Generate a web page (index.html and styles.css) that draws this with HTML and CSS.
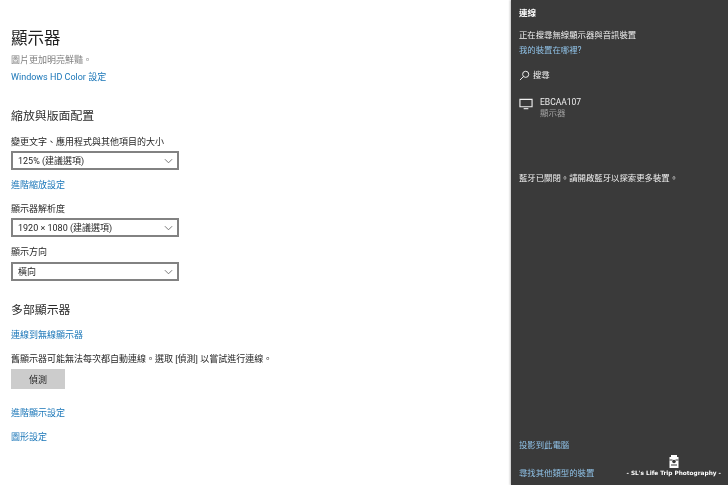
FILE: index.html
```html
<!DOCTYPE html>
<html lang="zh-Hant">
<head>
<meta charset="utf-8">
<title>顯示器</title>
<link rel="stylesheet" href="styles.css">
</head>
<body>
<div class="screen">
  <main class="settings">
    <h1 class="title">顯示器</h1>
    <p class="row hint">圖片更加明亮鮮豔。</p>
    <a class="row link l-hd">Windows HD Color 設定</a>
    <h2 class="heading h-scale">縮放與版面配置</h2>
    <p class="row label l-first">變更文字、應用程式與其他項目的大小</p>
    <div class="select s-scale"><span>125% (建議選項)</span><svg class="chev" viewBox="0 0 10 6"><path d="M1 1l4 4 4-4"/></svg></div>
    <a class="row link after-select">進階縮放設定</a>
    <p class="row label l-res">顯示器解析度</p>
    <div class="select s-res"><span>1920 × 1080 (建議選項)</span><svg class="chev" viewBox="0 0 10 6"><path d="M1 1l4 4 4-4"/></svg></div>
    <p class="row label l-orient">顯示方向</p>
    <div class="select s-orient"><span>橫向</span><svg class="chev" viewBox="0 0 10 6"><path d="M1 1l4 4 4-4"/></svg></div>
    <h2 class="heading h-multi">多部顯示器</h2>
    <a class="row link l-wireless">連線到無線顯示器</a>
    <p class="row label l-old">舊顯示器可能無法每次都自動連線。選取 [偵測] 以嘗試進行連線。</p>
    <button class="detect">偵測</button>
    <a class="row link l-adv">進階顯示設定</a>
    <a class="row link l-gfx">圖形設定</a>
  </main>
  <aside class="panel">
    <h3 class="p-title">連線</h3>
    <p class="p-row p-status">正在搜尋無線顯示器與音訊裝置</p>
    <a class="p-row p-link p-where">我的裝置在哪裡?</a>
    <div class="p-search">
      <svg class="i-search" viewBox="0 0 14 14"><circle cx="8.5" cy="5.5" r="3.9"/><path d="M5.7 8.3L1.2 12.8"/></svg>
      <span>搜尋</span>
    </div>
    <div class="device">
      <svg class="i-monitor" viewBox="0 0 15 12"><path d="M1 1h13v8H1z"/><path d="M5 11h5"/></svg>
      <div class="d-text">
        <div class="d-name">EBCAA107</div>
        <div class="d-type">顯示器</div>
      </div>
    </div>
    <p class="p-row p-bt">藍牙已關閉。請開啟藍牙以探索更多裝置。</p>
    <div class="p-bottom">
      <a class="p-row p-link">投影到此電腦</a>
      <a class="p-row p-link p-other">尋找其他類型的裝置</a>
    </div>
    <div class="mark">
      <svg class="mark-i" viewBox="0 0 12 15"><path class="m-w" d="M3 1h6v2h1.500v11h-9V3H3z"/><path class="m-b" d="M1.500 5.500h3v1h-3zM7.500 5.500h3v1h-3zM3 10.500h6v1H3z"/><circle class="m-b" cx="6" cy="7.500" r="1.800"/></svg>
      <div class="mark-t">- SL's Life Trip Photography -</div>
    </div>
  </aside>
</div>
</body>
</html>
```
FILE: styles.css
```css
* { box-sizing: border-box; margin: 0; padding: 0; }
html, body { width: 728px; height: 485px; overflow: hidden; background: #fff; }
body { font-family: "Roboto", "Noto Sans CJK TC", sans-serif; }
.screen { display: flex; width: 728px; height: 485px; filter: blur(.3px); }
.settings { width: 511px; padding: 0 0 0 11px; display: flex; flex-direction: column; align-items: flex-start; color: #262626; }
.title { font-size: 16.500px; font-weight: 400; line-height: 22px; margin-top: 28px; color: #222; }
.row { font-size: 9px; line-height: 14px; display: block; }
.hint { color: #808080; margin-top: 3px; }
.link { color: #1a76b8; }
.l-hd { margin-top: 3px; }
.heading { font-size: 11.900px; font-weight: 400; line-height: 16px; color: #2b2b2b; }
.h-scale { margin-top: 24px; }
.l-first { margin-top: 11px; }
.select { width: 168px; height: 19px; border: 2px solid #828282; background: #fff; display: flex; align-items: center; justify-content: space-between; padding: 0 4px 0 5px; font-size: 9px; color: #262626; }
.s-scale { margin-top: 2px; }
.s-res { margin-top: 2px; }
.s-orient { margin-top: 3px; }
.chev { width: 9px; height: 6px; fill: none; stroke: #6a6a6a; stroke-width: 1; }
.after-select { margin-top: 8px; }
.l-res { margin-top: 10px; }
.l-orient { margin-top: 8px; }
.h-multi { margin-top: 21px; }
.l-wireless { margin-top: 10px; }
.l-old { margin-top: 10px; }
.detect { width: 54px; height: 20px; margin-top: 3px; border: 0; background: #cccccc; font: inherit; font-size: 9px; color: #262626; }
.l-adv { margin-top: 17px; }
.l-gfx { margin-top: 10px; }
.panel { position: relative; width: 217px; height: 485px; background: #3a3a3a; padding: 0 0 0 8px; color: #f0f0f0; box-shadow: -1px 0 2px rgba(0,0,0,.25); display: flex; flex-direction: column; }
.p-title { font-size: 8.500px; font-weight: 700; line-height: 14px; margin-top: 6px; color: #fff; }
.p-row { font-size: 8.400px; line-height: 14px; display: block; }
.p-status { margin-top: 8px; }
.p-link { color: #8fc1e6; }
.p-where { margin-top: 1px; }
.p-search { display: flex; align-items: center; gap: 3px; margin-top: 11px; font-size: 8.400px; line-height: 14px; }
.i-search { width: 11px; height: 11px; fill: none; stroke: #f4f4f4; stroke-width: 1.200; }
.device { display: flex; gap: 7px; margin-top: 13px; }
.i-monitor { width: 14px; height: 12px; margin-top: 3px; fill: none; stroke: #f0f0f0; stroke-width: 1.200; }
.d-name { font-size: 8.500px; line-height: 12px; margin-top: 1px; color: #eee; }
.d-type { font-size: 8.500px; line-height: 12px; margin-top: -1px; color: #a0a0a0; }
.p-bt { margin-top: 52px; }
.p-bottom { margin-top: auto; padding-bottom: 5px; }
.p-other { margin-top: 14px; }
.mark { position: absolute; right: 7px; bottom: 7px; display: flex; flex-direction: column; align-items: center; color: #fff; }
.mark-i { width: 12px; height: 15px; }
.m-w { fill: #fff; }
.m-b { fill: #3a3a3a; }
.mark-t { font-family: "DejaVu Sans", sans-serif; font-size: 5.800px; font-weight: 700; line-height: 9px; white-space: nowrap; }
```
